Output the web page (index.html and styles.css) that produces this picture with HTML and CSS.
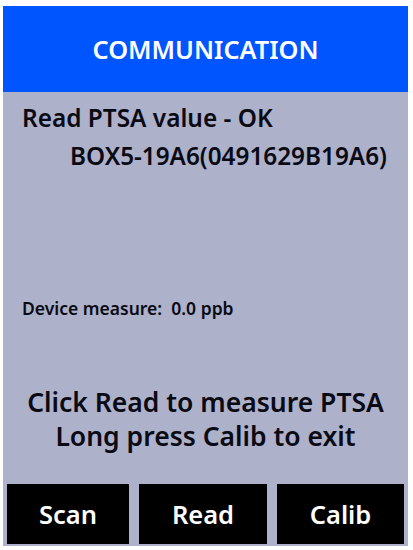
FILE: index.html
```html
<!DOCTYPE html>
<html>
<head>
<meta charset="utf-8">
<link rel="stylesheet" href="styles.css">
</head>
<body>
<div class="screen">
  <div class="header">COMMUNICATION</div>
  <div class="content">
    <div class="status">Read PTSA value - OK</div>
    <div class="device-id">BOX5-19A6(0491629B19A6)</div>
    <div class="measure">Device measure:&nbsp; 0.0 ppb</div>
    <div class="hint">
      <div>Click Read to measure PTSA</div>
      <div>Long press Calib to exit</div>
    </div>
  </div>
  <div class="buttons">
    <div class="btn">Scan</div>
    <div class="btn">Read</div>
    <div class="btn">Calib</div>
  </div>
</div>
</body>
</html>
```
FILE: styles.css
```css
html, body {
  margin: 0;
  padding: 0;
  background: #ffffff;
}
body {
  font-family: "Noto Sans", "Open Sans", sans-serif;
  font-weight: 600;
  color: #0a0a14;
}
.screen {
  margin: 6px 0 0 3px;
  width: 405px;
  height: 540px;
  background: #adb1c9;
  display: flex;
  flex-direction: column;
}
.header {
  height: 86px;
  background: #0055ff;
  color: #ffffff;
  font-size: 25.3px;
  display: flex;
  align-items: center;
  justify-content: center;
}
.content {
  flex: 1;
  display: flex;
  flex-direction: column;
  padding: 9.5px 0 0 19px;
}
.status {
  font-size: 24.4px;
  line-height: 32px;
}
.device-id {
  font-size: 24.3px;
  line-height: 32px;
  margin-top: 6px;
  padding-left: 48px;
}
.measure {
  font-size: 17.5px;
  line-height: 22px;
  margin-top: 125.5px;
}
.hint {
  margin-top: 65.7px;
  font-size: 26.5px;
  line-height: 34px;
  text-align: center;
  margin-left: -19px;
}
.buttons {
  display: grid;
  grid-template-columns: 122px 128px 127px;
  column-gap: 10px;
  padding: 0 5px 2px 4px;
  height: 60px;
}
.btn {
  background: #000000;
  color: #ffffff;
  font-size: 25.5px;
  display: flex;
  align-items: center;
  justify-content: center;
}
```
